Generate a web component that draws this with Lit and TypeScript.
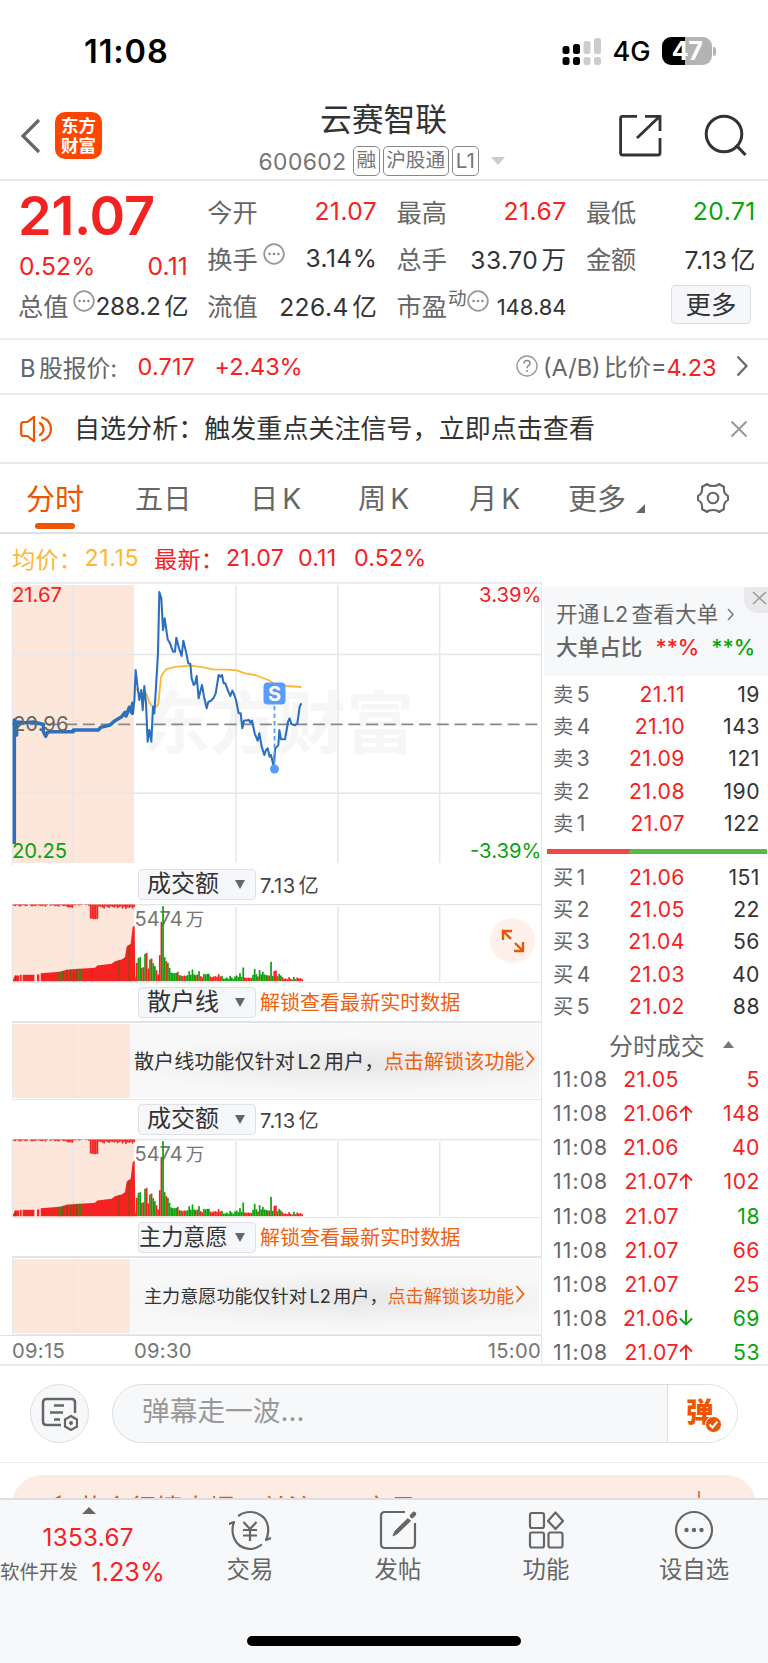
import { LitElement, html, svg, css } from "lit";
import { customElement, property } from "lit/decorators.js";

const base = css`
  :host { display: block; box-sizing: border-box; }
  * { box-sizing: border-box; }
  svg { display: block; flex: none; }
  .red { color: #f52222; }
  .green { color: #0aa30a; }
  .i { margin-left: 0.14em; }
`;

const dots = svg`<circle cx="11" cy="11" r="9.8" fill="none" stroke="#999" stroke-width="1.8"/><g fill="#888"><circle cx="6.6" cy="11" r="1.3"/><circle cx="11" cy="11" r="1.3"/><circle cx="15.4" cy="11" r="1.3"/></g>`;

@customElement("phone-status")
class PhoneStatus extends LitElement {
  static styles = [base, css`
    :host { height: 100px; }
    .bar { height: 102px; display: flex; align-items: center; padding: 0 52px 0 84px; color: #000; }
    .time { font-size: 32.5px; font-weight: 600; letter-spacing: 0.9px; margin-right: auto; }
    .sig { margin-right: 12px; }
    .net { font-size: 27.2px; font-weight: 500; width: 49.500px; letter-spacing: -0.2px; }
    .bat { width: 50px; height: 28px; border-radius: 9px; background: linear-gradient(90deg, #000 47%, #b3b3b3 47%); color: #fff; font-weight: 700; font-size: 25px; line-height: 28px; text-align: center; letter-spacing: -0.5px; }
    .tip { width: 3px; height: 9px; margin-left: 1px; border-radius: 0 3px 3px 0; background: #b3b3b3; }
  `];
  render() {
    return html`<div class="bar">
      <span class="time">11:08</span>
      <svg class="sig" width="39" height="28" viewBox="0 0 39 28">
        <g fill="#000"><rect x="0.5" y="9" width="7" height="8" rx="2.5"/><rect x="11" y="7" width="7" height="10" rx="2.5"/><rect x="0.5" y="20" width="7" height="8" rx="2.5"/><rect x="11" y="20" width="7" height="8" rx="2.5"/></g>
        <g fill="#ccc"><rect x="21.5" y="4" width="7" height="13" rx="2.5"/><rect x="32" y="1" width="7" height="16" rx="2.5"/><rect x="21.5" y="20" width="7" height="8" rx="2.5"/><rect x="32" y="20" width="7" height="8" rx="2.5"/></g>
      </svg>
      <span class="net">4G</span><span class="bat">47</span><span class="tip"></span>
    </div>`;
  }
}

@customElement("stock-header")
class StockHeader extends LitElement {
  static styles = [base, css`
    :host { height: 81px; border-bottom: 2px solid #e9e9eb; }
    .bar { display: grid; grid-template-columns: 250px 1fr 250px; height: 79px; }
    .left { display: flex; padding: 12px 0 0 20px; gap: 14px; }
    .left > svg { margin-top: 6px; }
    .logo { width: 47px; height: 47px; border-radius: 10px; background: #ff4500; color: #fff; font-size: 17.5px; line-height: 19.5px; font-weight: 700; text-align: center; padding-top: 4px; }
    .mid { display: flex; flex-direction: column; align-items: center; }
    .name { font-size: 31.8px; line-height: 38px; color: #333; margin-left: -1px; padding-top: 1px; }
    .codes { display: flex; align-items: center; height: 30px; margin-top: 7px; color: #757575; width: 251px; gap: 3px; }
    .code { font-size: 22.8px; letter-spacing: 0.45px; width: 91.5px; }
    .tag { border: 1.5px solid #888; border-radius: 5px; height: 30px; line-height: 27px; font-size: 19.7px; padding: 0 2.5px; white-space: nowrap; }
    .tag:last-of-type { font-size: 20.5px; padding: 0 3px; }
    .tri { margin-left: 9px; }
    .right { display: flex; justify-content: flex-end; gap: 42px; padding: 14px 21px 0 0; }
  `];
  render() {
    return html`<div class="bar">
      <div class="left">
        <svg width="21" height="36" viewBox="0 0 21 36"><path d="M19 2 3 18 19 34" fill="none" stroke="#666" stroke-width="3.2"/></svg>
        <div class="logo">东方<br>财富</div>
      </div>
      <div class="mid">
        <div class="name">云赛智联</div>
        <div class="codes"><span class="code">600602</span><span class="tag">融</span><span class="tag">沪股通</span><span class="tag">L1</span>
          <svg class="tri" width="14" height="8" viewBox="0 0 14 8"><path d="M0 0H14L7 8Z" fill="#ccc"/></svg></div>
      </div>
      <div class="right">
        <svg width="43" height="43" viewBox="0 0 43 43"><path d="M18 2.4H3.5Q1.6 2.4 1.6 4.3V39Q1.6 41 3.5 41H39Q41 41 41 39V24M18 24 40 3M26 2.4H41V17" fill="none" stroke="#333" stroke-width="2.8"/></svg>
        <svg width="43" height="43" viewBox="0 0 43 43"><circle cx="20" cy="20" r="17.8" fill="none" stroke="#333" stroke-width="3"/><path d="M32 31 41.5 41" stroke="#333" stroke-width="3.2"/></svg>
      </div>
    </div>`;
  }
}

@customElement("quote-stats")
class QuoteStats extends LitElement {
  static styles = [base, css`
    :host { height: 159px; border-bottom: 2px solid #ececee; padding: 6px 12px 0 18px; }
    .grid { display: grid; grid-template-columns: 170px 170px 170px 170px; column-gap: 19.300px; grid-template-rows: 47px 47px 47px; }
    .cell { display: flex; align-items: center; font-size: 25.2px; color: #666; white-space: nowrap; }
    .cell b { font-weight: 400; margin-left: auto; color: #333; letter-spacing: 0.45px; font-size: 24.600px; }
    .cell b.red { color: #f52222; letter-spacing: 0.500px; } .cell b.green { color: #0aa30a; letter-spacing: 0.500px; }
    .big { font-size: 54px; font-weight: 600; color: #f52222; letter-spacing: -0.2px; line-height: 54px; margin-top: 2px; align-self: start; }
    .chg { display: flex; justify-content: space-between; align-items: center; font-size: 24.6px; color: #f52222; padding: 16px 0 0 1px; letter-spacing: 0.150px; }
    .cell svg { margin: -8px 0 0 5px; }
    .cell .n { margin-left: 0; letter-spacing: -0.200px; font-size: 24.400px; }
    .pe svg { margin-left: 1px; }
    .cell sup { font-size: 18.500px; line-height: 18px; margin-top: -14px; margin-left: 1px; }
    .cell b.s { font-size: 22px; letter-spacing: 0; padding-top: 5px; }
    .more { justify-content: flex-end; padding-right: 5px; }
    .btn { width: 80px; height: 39px; line-height: 37px; border: 1.5px solid #dcdde3; background: #f6f7fa; border-radius: 4px; text-align: center; color: #333; font-size: 25.400px; margin-top: -1px; }
  `];
  render() {
    const d = html`<svg width="22" height="22" viewBox="0 0 22 22">${dots}</svg>`;
    return html`<div class="grid">
      <div class="big">21.07</div>
      <div class="cell">今开<b class="red">21.07</b></div>
      <div class="cell">最高<b class="red">21.67</b></div>
      <div class="cell">最低<b class="green">20.71</b></div>
      <div class="chg"><span>0.52%</span><span>0.11</span></div>
      <div class="cell">换手${d}<b>3.14%</b></div>
      <div class="cell">总手<b>33.70<span class="i">万</span></b></div>
      <div class="cell">金额<b>7.13<span class="i">亿</span></b></div>
      <div class="cell">总值${d}<b class="n">288.2<span class="i">亿</span></b></div>
      <div class="cell">流值<b>226.4<span class="i">亿</span></b></div>
      <div class="cell pe">市盈<sup>动</sup>${d}<b class="s">148.84</b></div>
      <div class="cell more"><span class="btn">更多</span></div>
    </div>`;
  }
}

@customElement("quote-rows")
class QuoteRows extends LitElement {
  static styles = [base, css`
    .b { display: flex; align-items: center; height: 55px; border-bottom: 2px solid #e9e9eb; font-size: 23.5px; color: #666; padding: 0 20px 1px; white-space: nowrap; }
    .b .lab { width: 117.500px; font-size: 23.800px; } .b .v { width: 77px; letter-spacing: 0.150px; }
    .b .p { letter-spacing: -0.1px; margin-right: auto; }
    .b .q { margin-right: 5px; }
    .b .end { margin-left: 19.500px; }
    .note { display: flex; align-items: center; height: 69px; border-bottom: 2px solid #e9e9eb; font-size: 26.050px; color: #333; padding: 0 20px; white-space: nowrap; }
    .note .t { margin: -3px auto 0 20px; }
    .tabs { display: flex; align-items: center; height: 70px; border-bottom: 2px solid #dfe0e3; font-size: 28.2px; color: #666; padding-left: 26px; white-space: nowrap; }
    .tab { position: relative; height: 68px; line-height: 71px; }
    .on { color: #ee5500; width: 109px; font-size: 29px; }
    .on::after { content: ""; position: absolute; left: 9px; top: 59px; width: 40px; height: 5.5px; border-radius: 3px; background: #ee5500; }
    .w1 { width: 115px; } .w2 { width: 108px; } .w3 { width: 111px; } .w4 { width: 99px; } .w5 { font-size: 29px; }
    .tri { margin: 21px 0 0 10px; }
    .gear { margin-left: 51px; }
    .avg { display: flex; align-items: center; height: 48px; padding: 0 0 0 12px; font-size: 23.2px; color: #f52222; white-space: nowrap; letter-spacing: 0.200px; }
    .y { color: #fdb833; }
    .a1 { width: 72.500px; } .a2 { width: 69.500px; letter-spacing: 0.600px; } .a3 { width: 72px; } .a4 { width: 72px; } .a5 { width: 56px; }
  `];
  render() {
    return html`
      <div class="b"><span class="lab">B<span class="i">股报价:</span></span><span class="v red">0.717</span><span class="p red">+2.43%</span>
        <svg class="q" width="22" height="22" viewBox="0 0 22 22"><circle cx="11" cy="11" r="10" fill="none" stroke="#999" stroke-width="1.4"/><path d="M8 8.6Q8 5.6 11 5.6T14 8.4Q14 10 12.2 10.9Q11 11.6 11 13.2" fill="none" stroke="#888" stroke-width="1.5"/><circle cx="11" cy="16" r="1" fill="#888"/></svg>
        <span>(A/B)<span class="i">比价=</span><span class="red">4.23</span></span>
        <svg class="end" width="12" height="22" viewBox="0 0 12 22"><path d="M1.5 1.5 10.5 11 1.5 20.5" fill="none" stroke="#666" stroke-width="2.2"/></svg>
      </div>
      <div class="note">
        <svg width="34" height="28" viewBox="0 0 34 28" fill="none" stroke="#ee5500" stroke-width="2.2" stroke-linejoin="round" stroke-linecap="round"><path d="M14 1.8V26.2L7.5 21H3.5Q1.2 21 1.2 18.7V9.3Q1.2 7 3.5 7H7.5Z"/><path d="M20 8Q23.5 10.5 23.5 14T20 20M22 2.5Q31 5.5 31 14T22 25.5"/></svg>
        <span class="t">自选分析：触发重点关注信号，立即点击查看</span>
        <svg width="18" height="18" viewBox="0 0 18 18"><path d="M1.5 1.5 16.5 16.5M16.5 1.5 1.5 16.5" stroke="#999" stroke-width="2"/></svg>
      </div>
      <div class="tabs">
        <span class="tab on">分时</span><span class="tab w1">五日</span><span class="tab w2">日<span class="i">K</span></span><span class="tab w3">周<span class="i">K</span></span><span class="tab w4">月<span class="i">K</span></span><span class="tab w5">更多</span>
        <svg class="tri" width="9" height="9" viewBox="0 0 9 9"><path d="M9 0V9H0Z" fill="#666"/></svg>
        <svg class="gear" width="34" height="32" viewBox="0 0 34 32" fill="none" stroke="#666" stroke-width="2.1" stroke-linejoin="round"><path d="M11 2Q12.500 4 17 4T23 2L28 5Q27.500 9 29 11.500Q30.500 13 32 14V18Q30.500 19 29 20.500Q27.500 23 28 27L23 30Q21.500 28 17 28T11 30L6 27Q6.500 23 5 20.500Q3.500 19 2 18V14Q3.500 13 5 11.500Q6.500 9 6 5Z"/><circle cx="17" cy="16" r="5.300"/></svg>
      </div>
      <div class="avg"><span class="y a1">均价：</span><span class="y a2">21.15</span><span class="a3">最新：</span><span class="a4">21.07</span><span class="a5">0.11</span><span>0.52%</span></div>`;
  }
}

const pricePre = "43,822 43,450 50,495 50,456 75,458 100,456 125,462 130,463 130,485 137,499 142,488 150,485 205,485 220,485 220,480 295,480 302,472 330,465 345,452 365,440 375,427 378,438 388,412 393,425 398,400 397,430 400,398";
const pricePost = "400,398 403,395 407,300 412,345 418,390 424,360 428,420 433,348 438,400 443,515 448,480 454,515 459,410 463,430 468,350 474,250 478,66 484,85 489,180 494,145 503,208 510,220 519,245 525,245 529,203 537,235 545,258 550,212 558,245 565,280 571,282 575,325 581,345 585,342 590,318 596,385 606,345 612,380 620,415 625,395 632,393 640,385 647,370 656,315 661,320 666,315 671,340 676,340 685,365 691,378 697,362 703,375 708,390 716,430 722,430 727,475 732,452 747,450 751,458 756,452 764,490 773,512 778,490 785,530 793,555 798,540 803,535 809,560 813,555 820,585 822,575 826,535 831,530 835,525 838,480 843,508 855,508 860,480 864,455 869,445 874,462 885,466 892,460 895,440 899,410 904,400";
const avgLine = "403,355 412,360 420,375 433,367 440,372 447,395 455,407 463,411 470,410 475,400 483,322 489,309 498,299 505,296 530,290 575,287 610,292 640,298 680,299 710,301 735,310 765,315 805,330 820,340 860,348 904,351";

@customElement("price-chart")
class PriceChart extends LitElement {
  static styles = [base, css`
    .lab { font-size: 20.300px; } .wm { font-size: 68px; font-weight: 700; fill: #f6f6f6; } .s { font-size: 20px; font-weight: 700; fill: #fff; }
  `];
  render() {
    return html`<svg width="542" height="283" viewBox="0 582 542 283">
      <path d="M12 583H543M12.500 583V866" stroke="#e6e8eb" stroke-width="1.500"/>
      <text class="wm" x="142" y="748">东方财富</text>
      <rect x="13" y="585" width="121" height="278" fill="#fde7da"/>
      <path d="M13 654.500H541M13 793.300H541M73 585V863M236 585V863M338 585V863M439.700 585V863" stroke="#e3e6eb" stroke-width="1.500"/>
      <path d="M12 724.300H540" stroke="#888" stroke-width="1.700" stroke-dasharray="12 5.700"/>
      <g transform="translate(0 570) scale(.33333)" fill="none" stroke-linejoin="round">
        <polyline points="${avgLine}" stroke="#fdb833" stroke-width="5.500"/>
        <polyline points="${pricePre}" stroke="#2a6fc0" stroke-width="10.500"/>
        <polyline points="${pricePost}" stroke="#2a6fc0" stroke-width="6.200"/>
      </g>
      <text class="lab" x="13" y="731" fill="#666">20.96</text>
      <path d="M274.500 706V768" stroke="#5a9cfb" stroke-width="1.800" stroke-dasharray="4.500 3"/>
      <circle cx="274.500" cy="769" r="4.500" fill="#5a9cfb"/>
      <rect x="263.500" y="682.500" width="22" height="22" rx="4" fill="#5a9cfb"/>
      <text class="s" x="274.500" y="701" text-anchor="middle">S</text>
      <text class="lab" x="12" y="602" fill="#f52222">21.67</text>
      <text class="lab" x="12" y="858" fill="#0aa30a">20.25</text>
      <text class="lab" x="541.500" y="602" text-anchor="end" fill="#f52222">3.39%</text>
      <text class="lab" x="541.500" y="858" text-anchor="end" fill="#0aa30a">-3.39%</text>
    </svg>`;
  }
}

const vols = "r55 g70 g72 r40 r42 g82 r85 r38 g65 r68 g54 g45 r33 r20 r78 r178 g225 g72 r60 g55 g40 g26 g24 g24 g25 r28 r18 g17 r15 r17 g16 g18 g30 g19 g35 g20 r18 r20 g30 r15 r12 g22 g20 g22 g22 r14 r12 r14 r15 r13 r21 r14 g16 g8 g8 g11 g7 g16 g11 g7 g14 g17 g12 g24 g13 g41 r11 r10 r11 r10 r10 g19 g37 g21 r14 g33 g20 g28 g20 g19 r17 r17 g58 g16 r31 r32 r15 g22 g17 r12 r7 r8 r6 r12 r7 g5 g13 r6 r11 r8 r9 r6".split(" ");
const drips = [3, 5, 2, 4, 6, 3, 2, 5, 4, 0, 3, 6, 4, 5, 2, 3, 4, 5, 3, 6, 2, 0, 4, 2, 3, 5, 4, 6, 2, 3, 5, 4, 7, 9, 8, 10, 3, 2, 1, 3, 2, 1, 0, 2, 1, 4, 42, 43, 44, 44, 43, 6, 7, 9, 12, 5, 8, 10, 6, 7, 9, 6, 11, 8, 6, 12, 7, 13, 9, 10, 7, 12, 8];

@customElement("volume-chart")
class VolumeChart extends LitElement {
  static styles = [base, css`.v { font-size: 20px; fill: #757575; }`];
  render() {
    return html`<svg width="542" height="79" viewBox="0 903.500 542 79">
      <rect x="13" y="905" width="121" height="76" fill="#fde7da"/>
      <path d="M12 904H543" stroke="#e0e3e7" stroke-width="1.500"/>
      <path d="M12.500 904V983M73 906V981M236 906V981M338 906V981M439.700 906V981" stroke="#e3e6eb" stroke-width="1.500"/>
      <text class="v" x="134.500" y="925.500">5474<tspan dx="3" font-size="18.500">万</tspan></text>
      <g transform="translate(0 860) scale(.33333)">
        <path fill="#f52222" d="M39 362V358L45 345H58V362ZM60 362V343H65V362ZM68 362V343H103V362ZM111 362V342H118V362ZM122 362V338L180 334L200 328L240 325L285 322L292 315L335 310L345 302L365 297L375 290L380 258L392 250L398 200L404 195L406 345L409 362Z"/>
        <path d="M179 334V362M239 325V362" stroke="#0aa30a" stroke-width="6"/>
        <path d="M188 331V362M201 328V362M212 327V362M221 326V362M230 325V362M357 298V362M387 254V362M46 345V362" stroke="#6b5a12" stroke-width="3"/>
        ${drips.map((h, i) => svg`<rect x="${38 + i * 5.03}" y="132" width="5.200" height="${h}" fill="#f52222"/>`)}
        ${vols.map((v, i) => svg`<rect x="${408 + i * 4.91}" y="${362 - +v.slice(1)}" width="5.100" height="${+v.slice(1)}" fill="${v[0] === "r" ? "#f52222" : "#0aa30a"}"/>`)}
      </g>
      <path d="M12 982.200H543" stroke="#e6e8eb" stroke-width="1.500"/>
    </svg>`;
  }
}

@customElement("indicator-head")
class IndicatorHead extends LitElement {
  @property() name = "";
  @property() value = "";
  static styles = [base, css`
    :host { height: 38.500px; padding: 4px 0 0 138px; }
    .row { display: flex; gap: 4px; align-items: center; white-space: nowrap; }
    .btn { display: flex; align-items: center; justify-content: space-between; width: 118px; height: 31px; line-height: 28px; border: 1.500px solid #dfe1e6; border-radius: 4px; background: #f6f7fa; color: #333; font-size: 24px; padding: 0 10px 1px 8px; }
    .btn svg { margin-top: 1px; }
    .long { padding-left: 0; font-size: 22.200px; }
    .val { font-size: 20.200px; color: #444; letter-spacing: 0.500px; }
    .lock { color: #f0610f; font-size: 20.050px; margin-top: -1.500px; }
  `];
  render() {
    return html`<div class="row"><span class="btn ${this.name.length > 3 ? "long" : ""}">${this.name}<svg width="10" height="9" viewBox="0 0 10 9"><path d="M0 0H10L5 9Z" fill="#666"/></svg></span>
      ${this.value ? html`<span class="val">${this.value}<span class="i">亿</span></span>` : html`<span class="lock">解锁查看最新实时数据</span>`}</div>`;
  }
}

@customElement("locked-panel")
class LockedPanel extends LitElement {
  @property() name = "";
  @property({ type: Boolean }) small = false;
  static styles = [base, css`
    :host { height: 79px; padding-left: 12px; }
    .p { height: 79px; border-top: 2px solid #e0e3e7; border-bottom: 1.500px solid #e6e8eb; border-left: 1px solid #e6e8eb; display: flex; padding: 1px 2px 1px 0; }
    .pre { flex: none; width: 117px; background: linear-gradient(90deg, transparent 60px, #e3e6eb 60px, #e3e6eb 61.500px, transparent 61.500px), #fde7da; }
    .msg { flex: 1; background: radial-gradient(ellipse 60% 38% at 55% 55%, #e7e7e7, #f8f8f800), #f8f8f8; display: flex; align-items: center; padding: 0 0 2px 4px; font-size: 20.100px; color: #333; white-space: nowrap; }
    .small { font-size: 18.100px; padding-left: 14px; }
    .l { color: #f0610f; margin-left: -0.500px; } .small .l { margin-left: 0; }
    .msg svg { margin: -2px 0 0 1px; }
  `];
  render() {
    return html`<div class="p"><div class="pre"></div><div class="msg ${this.small ? "small" : ""}"><span>${this.name}功能仅针对<span class="i">L2</span><span class="i">用户，</span></span><span class="l">点击解锁该功能</span>
      <svg width="10" height="18" viewBox="0 0 10 18"><path d="M1.500 1 8.500 9 1.500 17" fill="none" stroke="#f0610f" stroke-width="1.800"/></svg></div></div>`;
  }
}

@customElement("order-book")
class OrderBook extends LitElement {
  static styles = [base, css`
    .top { background: #f7f8fa; margin: 5px 0 0 2px; height: 89px; padding: 12px 0 0 12px; color: #666; position: relative; white-space: nowrap; }
    .t1 { display: flex; align-items: center; font-size: 21.600px; line-height: 30px; height: 30px; letter-spacing: 0.200px; }
    .t1 svg { margin-left: 8px; }
    .t2 { display: flex; font-size: 21.600px; font-weight: 500; line-height: 37px; }
    .t2 span { margin-left: 13px; }
    .t2 .green { margin-left: 12px; }
    .x { position: absolute; right: 0; top: 0; width: 24px; height: 26px; background: #e9e9eb; border-radius: 0 0 0 14px; padding: 4px 0 0 8px; }
    .rows { height: 161px; margin-top: 2px; }
    .r { display: grid; grid-template-columns: 54px 78px 1fr; height: 32.200px; line-height: 33px; padding: 0 8px 0 11px; color: #333; font-size: 21.200px; letter-spacing: 0.500px; text-align: right; }
    .r span:first-child { text-align: left; color: #666; font-size: 20.300px; }
    .r span.i { font-size: 21px; }
    .bar { display: flex; height: 5px; margin: 10px 1px 7px 5px; background: linear-gradient(105deg, #ef4848 0 37.500%, #5cb947 37.500%); }
    .h { display: flex; align-items: center; height: 44px; color: #666; font-size: 23.900px; gap: 18px; padding-left: 67px; }
    .h + .d { margin-top: -4px; }
    .d { display: grid; grid-template-columns: 67px 59px 16px 1fr; height: 34.150px; line-height: 35px; padding: 0 8px 0 11px; font-size: 21.200px; letter-spacing: 0.500px; color: #666; }
    .t { letter-spacing: 1.100px; }
    .d .p { text-align: right; } .d .n { text-align: right; }
    .d svg { margin: 9px 0 0 0; }
  `];
  render() {
    const row = (s: string, n: number, p: string, q: number) => html`<div class="r"><span>${s}<span class="i">${n}</span></span><span class="red">${p}</span><span>${q}</span></div>`;
    const deals: [string, string, number, string][] = [["21.05", "", 5, "red"], ["21.06", "u", 148, "red"], ["21.06", "", 40, "red"], ["21.07", "u", 102, "red"], ["21.07", "", 18, "green"], ["21.07", "", 66, "red"], ["21.07", "", 25, "red"], ["21.06", "d", 69, "green"], ["21.07", "u", 53, "green"]];
    const arrow = (a: string) => a === "u"
      ? html`<svg width="14" height="16" viewBox="0 0 14 16"><path d="M7 16V1.500M1 7.500 7 1.500 13 7.500" fill="none" stroke="#f52222" stroke-width="1.900"/></svg>`
      : a === "d" ? html`<svg width="14" height="16" viewBox="0 0 14 16"><path d="M7 0V14.500M1 8.500 7 14.500 13 8.500" fill="none" stroke="#0aa30a" stroke-width="1.900"/></svg>` : html`<i></i>`;
    return html`
      <div class="top">
        <div class="t1">开通<span class="i">L2</span><span class="i">查看大单</span><svg width="7" height="13" viewBox="0 0 7 13"><path d="M1 1 6 6.500 1 12" fill="none" stroke="#777" stroke-width="1.500"/></svg></div>
        <div class="t2">大单占比<span class="red">**%</span><span class="green">**%</span></div>
        <div class="x"><svg width="15" height="14" viewBox="0 0 15 14"><path d="M1 1 14 13M14 1 1 13" stroke="#999" stroke-width="1.500"/></svg></div>
      </div>
      <div class="rows">${row("卖", 5, "21.11", 19)}${row("卖", 4, "21.10", 143)}${row("卖", 3, "21.09", 121)}${row("卖", 2, "21.08", 190)}${row("卖", 1, "21.07", 122)}</div>
      <div class="bar"></div>
      <div class="rows">${row("买", 1, "21.06", 151)}${row("买", 2, "21.05", 22)}${row("买", 3, "21.04", 56)}${row("买", 4, "21.03", 40)}${row("买", 5, "21.02", 88)}</div>
      <div class="h">分时成交<svg width="11" height="7" viewBox="0 0 11 7"><path d="M0 7H11L5.500 0Z" fill="#777"/></svg></div>
      ${deals.map(([p, a, n, c]) => html`<div class="d"><span class="t">11:08</span><span class="p red">${p}</span>${arrow(a)}<span class="n ${c}">${n}</span></div>`)}`;
  }
}

@customElement("bottom-area")
class BottomArea extends LitElement {
  static styles = [base, css`
    .in { height: 99px; display: flex; align-items: flex-start; padding: 18px 0 0 30px; border-top: 2px solid #e9e9eb; border-bottom: 1px solid #ebebed; background: #fff; }
    .round { width: 59px; height: 59px; border-radius: 50%; border: 1.500px solid #dcdee3; background: #f7f8fa; display: grid; place-items: center; margin-right: 23px; }
    .pill { width: 626px; height: 59px; border: 1.500px solid #dcdee3; border-radius: 30px; display: flex; overflow: hidden; background: #f7f8fa; color: #999; font-size: 27.700px; line-height: 52px; padding-left: 29px; }
    .dan { margin-left: auto; width: 70px; border-left: 1.500px solid #dcdee3; background: #fff; color: #ee5500; font-weight: 900; font-size: 27.500px; line-height: 55px; padding-left: 18px; position: relative; }
    .dan svg { position: absolute; left: 37px; top: 31px; }
    .ban { height: 35px; padding: 12px 12px 0; overflow: hidden; }
    .card { height: 60px; border-radius: 34px; background: #fdece4; color: #ee5500; font-size: 26.400px; line-height: 32px; padding: 17px 56px 0 39px; display: flex; white-space: nowrap; }
    .card svg { margin-top: 3px; } .card .txt { margin-left: 14px; } .card .cut { margin: -1px 0 0 auto; }
    .nav { height: 165px; background: #f7f8fa; border-top: 2px solid #dcdfe3; }
    .items { display: grid; grid-template-columns: 176px 148px 148px 148px 148px; height: 105px; color: #666; }
    .idx { display: flex; flex-direction: column; color: #f52222; font-size: 24.200px; white-space: nowrap; }
    .idx svg { margin: 7px 0 0 82px; }
    .idx .a { margin-left: 42.500px; line-height: 30px; margin-top: 9px; letter-spacing: 0.350px; }
    .idx .b { display: flex; align-items: center; line-height: 34px; margin-top: 2px; font-size: 25.200px; }
    .idx .b span { font-size: 19.500px; color: #666; width: 91.500px; }
    .it { display: flex; flex-direction: column; align-items: center; font-size: 23.400px; line-height: 30px; padding-top: 10px; }
    .it svg { margin-bottom: 5px; }
    .home { width: 274px; height: 10px; border-radius: 5px; background: #000; margin: 31px auto 0; }
  `];
  render() {
    const ic = (p: unknown) => html`<svg width="42" height="40" viewBox="0 0 42 40" fill="none" stroke="#666" stroke-width="2.200" stroke-linejoin="round">${p}</svg>`;
    return html`
      <div class="in">
        <div class="round"><svg width="37" height="34" viewBox="0 0 37 34" fill="none" stroke="#666" stroke-width="2.500"><path d="M20 28H5.500Q2 28 2 24.500V5.500Q2 2 5.500 2H30.500Q34 2 34 5.500V16"/><path d="M13 8.500H23M9 15.500H22M13 22.500H19"/><path d="M30 19 36 22.500V29.500L30 33 24 29.500V22.500Z" stroke-width="2.200"/><circle cx="30" cy="26" r="2" fill="#666" stroke="none"/></svg></div>
        <div class="pill"><span>弹幕走一波...</span><div class="dan">弹<svg width="17" height="17" viewBox="0 0 17 17"><circle cx="8.500" cy="8.500" r="8" fill="#ee5500" stroke="#fff" stroke-width="1"/><path d="M4.500 8.500 7.500 11.500 12.500 5.500" fill="none" stroke="#fff" stroke-width="2"/></svg></div></div>
      </div>
      <div class="ban"><div class="card"><svg width="12" height="20" viewBox="0 0 12 20"><path d="M0 5 5 2.500 9.500 0V20H6V4.500L0 7Z" fill="#ee5500"/></svg><span class="txt">黄金行情大爆，关注T+0交易</span><svg class="cut" width="2" height="20" viewBox="0 0 2 20"><path d="M1 0V20" stroke="#ee5500" stroke-width="1.500"/></svg></div></div>
      <div class="nav">
        <div class="items">
          <div class="idx"><svg width="14" height="7" viewBox="0 0 14 7"><path d="M0 7H14L7 0Z" fill="#666"/></svg><div class="a">1353.67</div><div class="b"><span>软件开发</span>1.23%</div></div>
          <div class="it">${ic(svg`<path d="M10 5.500Q15 2 21 2Q30 2 36 9Q40 15 39 23Q38.500 27 37 30L42 28M32 35Q27 39 21 39Q9 38 5 28Q2 20 5 12L0 14" stroke-linecap="round"/><path d="M14.500 12 21 19 27.500 12M21 19V31M14 20H28M14 25.500H28"/>`)}交易</div>
          <div class="it">${ic(svg`<path d="M28 2H8Q4 2 4 6V34Q4 38 8 38H34Q38 38 38 34V13"/><path d="M16 26 18 21 31 8.500 33.500 11 20.500 23.500Z" fill="#666" stroke-width="1"/><path d="M35 6 37 4" stroke-width="4.500" stroke-linecap="round"/>`)}发帖</div>
          <div class="it">${ic(svg`<rect x="5" y="3" width="14" height="15" rx="2"/><rect x="5" y="22.500" width="14" height="15" rx="2"/><rect x="23.500" y="22.500" width="14" height="15" rx="2"/><path d="M30.500 2.500 38 11 30.500 19 23 11Z"/>`)}功能</div>
          <div class="it">${ic(svg`<circle cx="21" cy="20" r="18"/><g fill="#666" stroke="none"><circle cx="13.500" cy="20" r="2.200"/><circle cx="21" cy="20" r="2.200"/><circle cx="28.500" cy="20" r="2.200"/></g>`)}设自选</div>
        </div>
        <div class="home"></div>
      </div>`;
  }
}

@customElement("app-root")
class AppRoot extends LitElement {
  static styles = [base, css`
    :host { width: 768px; height: 1663px; overflow: hidden; background: #fff; font-family: Inter, "Noto Sans CJK SC", sans-serif; }
    .main { display: grid; grid-template-columns: 542px 226px; height: 782px; overflow: hidden; }
    .col { border-right: 1.500px solid #e3e6eb; position: relative; overflow: hidden; }
    .times { display: flex; justify-content: space-between; font-size: 20.200px; letter-spacing: 0.300px; color: #757575; line-height: 30px; padding: 0 0 0 12px; border-top: 1px solid #dfe1e5; }
    .times span:first-child { width: 122px; } .times span:last-child { margin-left: auto; }
    .full { position: absolute; left: 490px; top: 336px; width: 45px; height: 45px; border-radius: 50%; background: #fef1ea; display: grid; place-items: center; }
  `];
  render() {
    return html`
      <phone-status></phone-status><stock-header></stock-header><quote-stats></quote-stats><quote-rows></quote-rows>
      <div class="main">
        <div class="col">
          <price-chart></price-chart>
          <indicator-head name="成交额" value="7.13"></indicator-head><volume-chart></volume-chart>
          <indicator-head name="散户线"></indicator-head><locked-panel name="散户线"></locked-panel>
          <indicator-head name="成交额" value="7.13"></indicator-head><volume-chart></volume-chart>
          <indicator-head name="主力意愿"></indicator-head><locked-panel name="主力意愿" small></locked-panel>
          <div class="times"><span>09:15</span><span>09:30</span><span>15:00</span></div>
          <div class="full"><svg width="24" height="24" viewBox="0 0 24 24" fill="none" stroke="#ee5500" stroke-width="2.400"><path d="M2 11V2H11M2 2 10 10M22 13V22H13M22 22 14 14"/></svg></div>
        </div>
        <order-book></order-book>
      </div>
      <bottom-area></bottom-area>`;
  }
}
